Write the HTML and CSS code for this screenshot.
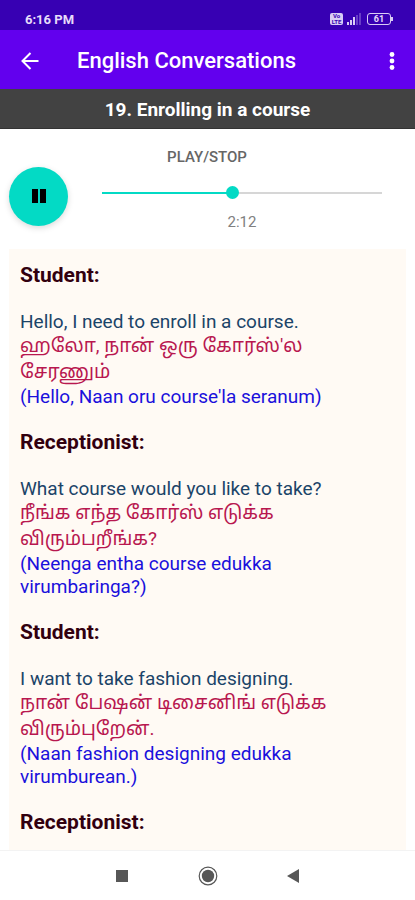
FILE: index.html
```html
<!DOCTYPE html>
<html lang="en">
<head>
  <meta charset="UTF-8">
  <meta name="viewport" content="width=device-width, initial-scale=1.0">
  <title>English Conversations</title>
  <link rel="stylesheet" href="styles.css">
</head>
<body>
  <div class="status-bar">
    <span>6:16 PM</span>
    <div class="status-icons">
      <div class="volte"><span>Vo</span><span>LTE</span></div>
      <svg width="14" height="12" viewBox="0 0 14 12" fill="#d9ccf5">
        <rect x="0" y="9" width="2" height="3"/>
        <rect x="3" y="7" width="2" height="5"/>
        <rect x="6" y="4" width="2" height="8"/>
        <rect x="9" y="2" width="2" height="10" opacity="0.3"/>
        <rect x="12" y="0" width="2" height="12" opacity="0.3"/>
      </svg>
      <div class="battery">61</div>
    </div>
  </div>

  <header class="app-bar">
    <button type="button" class="icon-btn" aria-label="Back">
      <svg width="18" height="18" viewBox="0 0 18 18" fill="none" stroke="#fff" stroke-width="2">
        <path d="M17.5 9H2M9.5 1L1.5 9l8 8"/>
      </svg>
    </button>
    <h1>English Conversations</h1>
    <button type="button" class="icon-btn" aria-label="More options">
      <svg width="6" height="18" viewBox="0 0 6 18" fill="#fff">
        <circle cx="3" cy="2.5" r="2.4"/>
        <circle cx="3" cy="9" r="2.4"/>
        <circle cx="3" cy="15.5" r="2.4"/>
      </svg>
    </button>
  </header>

  <h2 class="lesson-title">19. Enrolling in a course</h2>

  <section class="player">
    <button type="button" class="play-btn" aria-label="Pause">
      <svg width="16" height="16" viewBox="0 0 16 16">
        <path d="M1 1h6v14H1zM9 1h6v14H9z"/>
      </svg>
    </button>
    <div class="controls">
      <label for="seek">PLAY/STOP</label>
      <input type="range" id="seek" class="seek" min="0" max="1000" value="463">
      <span class="time">2:12</span>
    </div>
  </section>

  <main class="conversation">
    <h3>Student:</h3>
    <p class="english">Hello, I need to enroll in a course.</p>
    <p class="tamil" lang="ta">ஹலோ, நான் ஒரு கோர்ஸ்'ல சேரணும்</p>
    <p class="spoken">(Hello, Naan oru course'la seranum)</p>

    <h3>Receptionist:</h3>
    <p class="english">What course would you like to take?</p>
    <p class="tamil" lang="ta">நீங்க எந்த கோர்ஸ் எடுக்க விரும்பறீங்க?</p>
    <p class="spoken">(Neenga entha course edukka virumbaringa?)</p>

    <h3>Student:</h3>
    <p class="english">I want to take fashion designing.</p>
    <p class="tamil" lang="ta">நான் பேஷன் டிசைனிங் எடுக்க விரும்புறேன்.</p>
    <p class="spoken">(Naan fashion designing edukka virumburean.)</p>

    <h3>Receptionist:</h3>
  </main>

  <nav class="nav-bar">
    <button type="button" class="icon-btn" aria-label="Recent apps">
      <svg width="20" height="20" viewBox="0 0 20 20"><rect x="4" y="4" width="12" height="12" fill="#575757"/></svg>
    </button>
    <button type="button" class="icon-btn" aria-label="Home">
      <svg width="20" height="20" viewBox="0 0 20 20">
        <circle cx="10" cy="10" r="8.8" fill="none" stroke="#575757" stroke-width="1.2"/>
        <circle cx="10" cy="10" r="6.2" fill="#575757"/>
      </svg>
    </button>
    <button type="button" class="icon-btn" aria-label="Back">
      <svg width="20" height="20" viewBox="0 0 20 20"><path d="M3 10l12-7v14z" fill="#575757"/></svg>
    </button>
  </nav>
</body>
</html>
```

FILE: styles.css
```css
* {
  box-sizing: border-box;
}

body {
  margin: 0;
  height: 100vh;
  display: flex;
  flex-direction: column;
  font-family: Roboto, "Noto Sans Tamil", "Noto Sans", sans-serif;
  background-color: #fff;
}

h1, h2, h3, p {
  margin: 0;
}

button {
  border: none;
  padding: 0;
  cursor: pointer;
}

svg {
  display: block;
}

.status-bar {
  display: flex;
  flex-shrink: 0;
  justify-content: space-between;
  align-items: center;
  height: 30px;
  padding: 8px 22px 0 25px;
  background-color: #3700b3;
  color: #e6dcfa;
  font-size: 13px;
  font-weight: 700;
}

.status-icons {
  display: flex;
  align-items: center;
  gap: 4px;
}

.volte {
  display: flex;
  flex-direction: column;
  align-items: center;
  width: 13px;
  height: 12px;
  border-radius: 2px;
  background-color: #d9ccf5;
  color: #3700b3;
  font-size: 6px;
  line-height: 6px;
}

.battery {
  position: relative;
  width: 24px;
  height: 12px;
  margin-left: 2px;
  margin-right: 2px;
  border: 1px solid #d9ccf5;
  border-radius: 3px;
  font-size: 9px;
  line-height: 10px;
  text-align: center;
}

.battery::after {
  content: "";
  position: absolute;
  top: 3px;
  right: -3px;
  width: 2px;
  height: 4px;
  background-color: #d9ccf5;
}

.app-bar {
  display: flex;
  flex-shrink: 0;
  align-items: center;
  height: 59px;
  padding: 2px 11px 0 18px;
  background-color: #6200ee;
  color: #fff;
}

.app-bar h1 {
  flex: 1;
  margin-left: 35px;
  font-size: 22px;
  font-weight: 500;
}

.icon-btn {
  display: flex;
  justify-content: center;
  align-items: center;
  width: 24px;
  height: 32px;
  background: none;
}

.lesson-title {
  flex-shrink: 0;
  height: 40px;
  border-bottom: 1px solid #333;
  background-color: #424242;
  color: #fff;
  font-size: 19px;
  line-height: 42px;
  text-align: center;
}

.player {
  display: flex;
  flex-shrink: 0;
  align-items: center;
  height: 120px;
  padding: 0 33px 0 9px;
}

.play-btn {
  display: flex;
  justify-content: center;
  align-items: center;
  width: 59px;
  height: 59px;
  margin-top: 14px;
  border-radius: 50%;
  background-color: #03dac5;
  box-shadow: 0 2px 6px rgba(0, 0, 0, 0.15);
}

.controls {
  display: flex;
  flex: 1;
  flex-direction: column;
  align-items: center;
  margin-left: 34px;
}

.controls label {
  margin-right: 70px;
  color: #666;
  font-size: 15px;
  font-weight: 500;
  line-height: 20px;
}

.seek {
  appearance: none;
  width: 100%;
  height: 14px;
  margin: 19px 0 12px;
  background: linear-gradient(to right, #03dac5 46%, #d6d6d6 46%) center / 100% 2px no-repeat;
}

.seek::-webkit-slider-thumb {
  appearance: none;
  width: 13px;
  height: 13px;
  border-radius: 50%;
  background-color: #03dac5;
}

.time {
  color: #808080;
  font-size: 15px;
  line-height: 20px;
}

.conversation {
  flex: 1;
  min-height: 0;
  overflow: hidden;
  margin: 0 9px;
  padding: 15px 11px;
  background-color: #fffaf4;
  font-size: 19px;
  line-height: 23px;
}

.conversation h3 {
  margin-bottom: 23px;
  color: #32000f;
  font-size: 21px;
  font-weight: 700;
}

.english {
  color: #1b4468;
}

.tamil {
  color: #b8174f;
  line-height: 26px;
}

.spoken {
  margin-bottom: 23px;
  color: #1a10dc;
}

.nav-bar {
  display: flex;
  flex-shrink: 0;
  justify-content: center;
  align-items: center;
  gap: 62px;
  height: 50px;
  border-top: 1px solid #f3f3f3;
}
```
